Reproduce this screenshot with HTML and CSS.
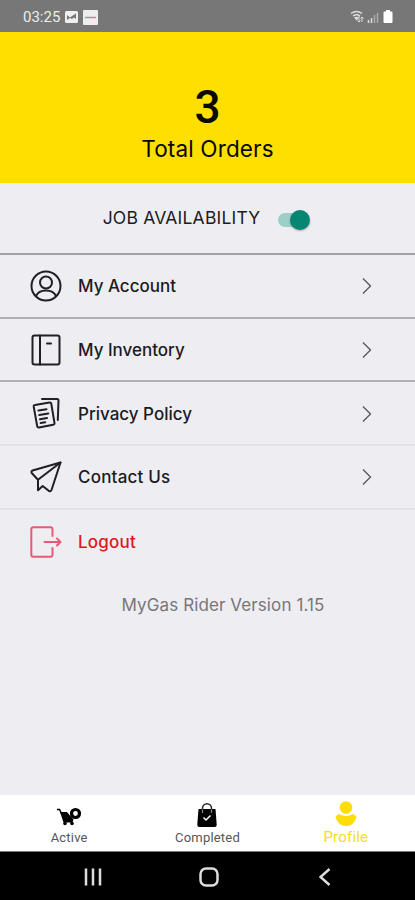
FILE: index.html
```html
<!DOCTYPE html>
<html lang="en">
<head>
  <title>MyGas Rider — Profile</title>
  <meta charset="utf-8">
  <meta name="viewport" content="width=device-width, initial-scale=1">
  <link rel="stylesheet" href="styles.css">
</head>
<body>
  <div class="status">
    <span class="status__time">03:25</span>
    <svg class="status__picture" width="13" height="12" viewBox="0 0 13 12" aria-hidden="true">
      <rect width="13" height="12" rx="1.5" fill="#f0f0f0"/>
      <path d="M2 4 5 6.500 7 5l4-2.500V8L9 6.500 7 8 5 7 2 9Z" fill="#777"/>
    </svg>
    <svg class="status__app" width="15" height="15" viewBox="0 0 15 15" aria-hidden="true">
      <rect width="15" height="15" rx="1" fill="#eee"/>
      <path d="M2 7.500h5" stroke="#999" stroke-width="1.500"/>
      <path d="M7 7.500h6" stroke="#df7896" stroke-width="1.500"/>
    </svg>
    <svg class="status__signal" width="44" height="16" viewBox="0 0 44 16" aria-hidden="true">
      <path d="M1 4.500q5.500-4 11 0M3 7q3.500-2.500 7 0" fill="none" stroke="#ddd" stroke-width="1.500"/>
      <path d="m4 8.500 2.500 3 2.500-3q-2.500-1.500-5 0Z" fill="#ddd"/>
      <path d="M9 7v6M12 8v5M7.500 11.500 9 13l1.500-1.500M10.500 9.500 12 8l1.500 1.500" fill="none" stroke="#ddd"/>
      <path d="M18.500 11v3M21.500 9v5" stroke="#ddd" stroke-width="1.500"/>
      <path d="M24.500 6v8M27.500 4v10" stroke="#aaa" stroke-width="1.500"/>
      <path d="M36 1h4v1.500h1.500q1 0 1 1V13q0 1-1 1h-7q-1 0-1-1V3.500q0-1 1-1H36Z" fill="#fff"/>
    </svg>
  </div>

  <header class="summary">
    <div class="summary__count">3</div>
    <div class="summary__label">Total Orders</div>
  </header>

  <main class="main">
    <label class="availability">
      <span class="availability__text">JOB AVAILABILITY</span>
      <input class="switch" type="checkbox" checked>
    </label>

    <nav class="menu" aria-label="Profile">
      <a href="#" class="menu__link">
        <svg class="menu__icon" viewBox="0 0 32 32" aria-hidden="true">
          <circle cx="16" cy="16" r="14.500"/>
          <circle cx="16" cy="12.500" r="6"/>
          <path d="M6 26q2.500-5.500 10-5.500T26 26"/>
        </svg>
        <span class="menu__text">My Account</span>
        <svg class="menu__arrow" viewBox="0 0 10 16" aria-hidden="true"><path d="m1 .5 7.500 7.500L1 15.500"/></svg>
      </a>
      <a href="#" class="menu__link">
        <svg class="menu__icon" viewBox="0 0 32 32" aria-hidden="true">
          <rect x="2.500" y="1.500" width="27" height="29" rx="2"/>
          <path d="M10 1.500v29M17 9.500h4"/>
        </svg>
        <span class="menu__text">My Inventory</span>
        <svg class="menu__arrow" viewBox="0 0 10 16" aria-hidden="true"><path d="m1 .5 7.500 7.500L1 15.500"/></svg>
      </a>
      <a href="#" class="menu__link menu__link--light">
        <svg class="menu__icon" viewBox="0 0 32 32" aria-hidden="true">
          <path d="m5 7 14.500-2.500q1.500-.2 1.800 1.300l3.200 19.200q.2 1.500-1.300 1.700L9 29.500q-1.500.2-1.800-1.300L3.700 8.500Q3.500 7.200 5 7Z"/>
          <path d="M12 1h15q1.500 0 1.500 1.500l-.7 19.500M8.500 12.500l8-1.300M9.300 17l9-1.500M10 21.300l7-1.200M10.700 25l4.500-.7"/>
        </svg>
        <span class="menu__text">Privacy Policy</span>
        <svg class="menu__arrow" viewBox="0 0 10 16" aria-hidden="true"><path d="m1 .5 7.500 7.500L1 15.500"/></svg>
      </a>
      <a href="#" class="menu__link menu__link--light">
        <svg class="menu__icon" viewBox="0 0 32 32" aria-hidden="true">
          <path d="M30.500 1.500 2.500 9.500q-1.500.7-.8 2.500L8 18.800v10.500l4.700-4.300 6.300 5q1.800.8 2.500-1Z"/>
          <path d="M30.500 1.500 8 18.800"/>
        </svg>
        <span class="menu__text menu__text--wide">Contact Us</span>
        <svg class="menu__arrow" viewBox="0 0 10 16" aria-hidden="true"><path d="m1 .5 7.500 7.500L1 15.500"/></svg>
      </a>
      <a href="#" class="menu__link menu__link--logout">
        <svg class="menu__icon" viewBox="0 0 32 32" aria-hidden="true">
          <path d="M22.500 10V3.500q0-2.200-2-2.200H3.300q-2 0-2 2.200v25q0 2.200 2 2.200h17.200q2 0 2-2.200V22"/>
          <path d="M14.500 16H30M27 12.500 30.500 16 27 19.500"/>
        </svg>
        <span class="menu__text menu__text--wide">Logout</span>
      </a>
    </nav>

    <p class="version">MyGas Rider Version 1.15</p>
  </main>

  <nav class="tabs" aria-label="Main">
    <a href="#" class="tabs__link">
      <svg class="tabs__icon" width="28" height="26" viewBox="0 0 28 26" aria-hidden="true">
        <path d="M2 6.500h2.500l2 4" fill="none" stroke="#000" stroke-width="1.500"/>
        <path d="M5 9h7l2.500 3 4 4.500-1 3H8.500Z"/>
        <circle cx="10" cy="20.500" r="1.800"/><circle cx="17" cy="20.500" r="1.800"/>
        <circle cx="20.500" cy="10.500" r="4" fill="#fff" stroke="#000" stroke-width="3.200"/>
      </svg>
      Active
    </a>
    <a href="#" class="tabs__link">
      <svg class="tabs__icon" width="28" height="26" viewBox="0 0 28 26" aria-hidden="true">
        <path d="M5.500 6h17l1.200 15.500q.1 2.500-2 2.500H6.300q-2.100 0-2-2.500Z"/>
        <path d="M9.500 10V6M18.500 10V6" stroke="#888" stroke-width="1.200"/>
        <path d="M9.500 6.500V5.300a4.500 4.500 0 0 1 9 0v1.200" fill="none" stroke="#222" stroke-width="1.500"/>
        <path d="m10.500 14.500 2.500 2.500 4.500-4.500" fill="none" stroke="#fff" stroke-width="1.500"/>
      </svg>
      Completed
    </a>
    <a href="#" class="tabs__link tabs__link--active" aria-current="page">
      <svg class="tabs__icon" width="28" height="26" viewBox="0 0 28 26" aria-hidden="true">
        <circle cx="14" cy="6.500" r="6.300"/>
        <path d="M7 13q7 4 14 0 3.300 1.500 3.500 3Q22 25 14 25T3.500 16Q3.700 14.500 7 13Z"/>
      </svg>
      Profile
    </a>
  </nav>

  <div class="system">
    <svg width="18" height="18" viewBox="0 0 18 18" aria-hidden="true"><path d="M2 .5v17M9 .5v17M16 .5v17"/></svg>
    <svg width="20" height="20" viewBox="0 0 20 20" aria-hidden="true"><rect x="1.500" y="1.500" width="17" height="17" rx="5.500"/></svg>
    <svg width="12" height="18" viewBox="0 0 12 18" aria-hidden="true"><path d="m10.500 1-9 8 9 8"/></svg>
  </div>
</body>
</html>
```

FILE: styles.css
```css
*, *::before, *::after {
  margin: 0;
  padding: 0;
  box-sizing: border-box;
}

body {
  display: flex;
  flex-direction: column;
  height: 100vh;
  min-height: 900px;
  background-color: #eeedf2;
  color: #1b1b20;
  font-family: "Inter", sans-serif;
}

a {
  color: inherit;
  text-decoration: none;
}

.status {
  display: flex;
  align-items: center;
  height: 32px;
  padding: 2px 21px 0 23px;
  background: #777777;
  color: #eeeeee;
  font: 15px/20px "Roboto", sans-serif;
}

.status__picture {
  margin-left: 5px;
}

.status__app {
  margin-left: 5px;
}

.status__signal {
  margin-left: auto;
}

.summary {
  height: 151px;
  padding-top: 52px;
  background: #ffdf00;
  color: #090900;
  text-align: center;
}

.summary__count {
  font: 500 46px/46px "Roboto", sans-serif;
}

.summary__label {
  padding-top: 4px;
  font-size: 22.5px;
  line-height: 30px;
  letter-spacing: 0.15px;
}

.main {
  flex: 1;
}

.availability {
  display: flex;
  align-items: center;
  justify-content: center;
  gap: 18px;
  height: 72px;
  padding-right: 2px;
  padding-bottom: 1px;
  border-bottom: 2px solid #a2a1a7;
  font-size: 17.500px;
}

.availability__text {
  letter-spacing: 0.2px;
}

.switch {
  position: relative;
  width: 32px;
  height: 22px;
  margin-top: 4px;
  appearance: none;
}

.switch::before {
  content: "";
  display: block;
  width: 27px;
  height: 14px;
  margin-top: 4px;
  border-radius: 7px;
  background: #9bcfc8;
}

.switch::after {
  content: "";
  position: absolute;
  top: 1px;
  right: 0;
  width: 20px;
  height: 20px;
  border-radius: 50%;
  background: #078773;
  box-shadow: 0 1px 2px rgba(0, 0, 0, 0.3);
}

.menu__link {
  display: flex;
  align-items: center;
  height: 63.700px;
  padding: 1px 43px 0 30px;
  border-bottom: 2px solid #b0afb5;
}

.menu__link--light {
  border-bottom-color: #e1e0e5;
}

.menu__link--logout {
  padding-top: 0;
  border-bottom: none;
  color: #df1818;
}

.menu__icon {
  width: 32px;
  height: 32px;
  fill: none;
  stroke: #202024;
  stroke-width: 2;
  stroke-linejoin: round;
  stroke-linecap: round;
}

.menu__link--logout .menu__icon {
  stroke: #e65b78;
}

.menu__text {
  margin-left: 16px;
  font-size: 17px;
  font-weight: 500;
  line-height: 24px;
}

.menu__text--wide {
  letter-spacing: 0.2px;
}

.menu__arrow {
  width: 10px;
  height: 16px;
  margin-left: auto;
  fill: none;
  stroke: #55555b;
  stroke-width: 1.300;
}

.version {
  padding-top: 20px;
  padding-left: 31px;
  color: #77767b;
  font-size: 17px;
  line-height: 24px;
  letter-spacing: 0.1px;
  text-align: center;
}

.tabs {
  display: grid;
  grid-template-columns: repeat(3, 1fr);
  height: 57px;
  background: #ffffff;
  border-bottom: 1px solid #777777;
}

.tabs__link {
  display: flex;
  flex-direction: column;
  align-items: center;
  padding-top: 8px;
  color: #55555a;
  font: 13px/17px "Roboto", sans-serif;
  letter-spacing: 0.2px;
}

.tabs__icon {
  fill: #000000;
}

.tabs__link--active {
  padding-top: 6px;
  color: #f2df20;
  font-size: 15px;
  line-height: 20px;
}

.tabs__link--active .tabs__icon {
  fill: #fddd08;
}

.system {
  display: flex;
  align-items: center;
  justify-content: space-between;
  height: 48px;
  padding: 1px 84px 0;
  background: #000000;
}

.system svg {
  fill: none;
  stroke: #dddddd;
  stroke-width: 2.500;
}

.system svg:nth-child(2) {
  margin-right: 4px;
}
```
